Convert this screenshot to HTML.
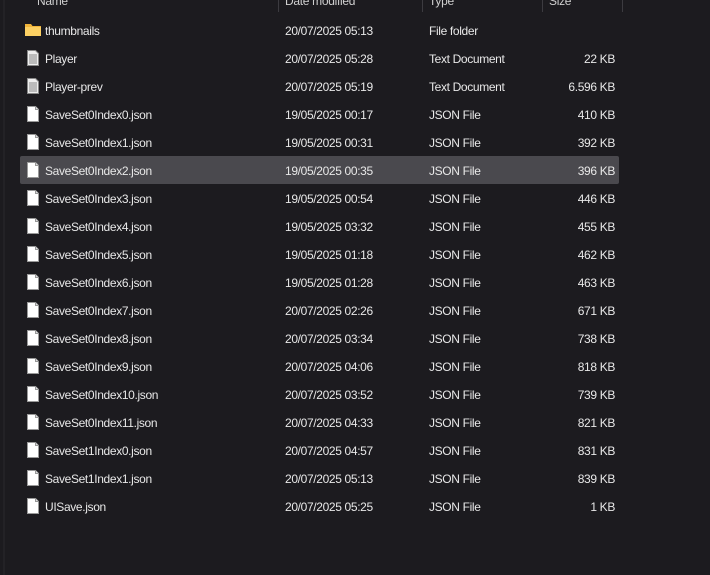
<!DOCTYPE html>
<html><head><style>
body{margin:0;width:710px;height:575px;background:#1c1b1f;font-family:"Liberation Sans",sans-serif;font-size:12px;color:#e8e8e8;position:relative;overflow:hidden}
.lb{position:absolute;left:3px;top:0;width:2px;height:575px;background:#232226}
.hd{position:absolute;top:-6px;font-size:12px;color:#cfcfcf;letter-spacing:-0.3px}
.sep{position:absolute;top:0;width:1px;height:12px;background:#3c3b40}
.r{position:absolute;left:20px;width:599px;height:28px}
.r.sel{background:#4a494e;border-radius:2px}
.r span{position:absolute;top:8px;white-space:nowrap;letter-spacing:-0.35px}
.n{left:25px}.d{left:265px}.t{left:409px}.s{right:4px}
.ic{position:absolute;left:7px;top:6px}
</style></head><body>
<div class="lb"></div>
<div class="hd" style="left:37px">Name</div>
<div class="hd" style="left:285px">Date modified</div>
<div class="hd" style="left:429px">Type</div>
<div class="hd" style="left:549px">Size</div>
<div class="sep" style="left:278px"></div><div class="sep" style="left:422px"></div><div class="sep" style="left:542px"></div><div class="sep" style="left:622px"></div>
<div id="rows"></div>
<script>
const data=[["thumbnails","20/07/2025 05:13","File folder","","f"],["Player","20/07/2025 05:28","Text Document","22 KB","t"],["Player-prev","20/07/2025 05:19","Text Document","6.596 KB","t"],
["SaveSet0Index0.json","19/05/2025 00:17","JSON File","410 KB"],["SaveSet0Index1.json","19/05/2025 00:31","JSON File","392 KB"],["SaveSet0Index2.json","19/05/2025 00:35","JSON File","396 KB"],
["SaveSet0Index3.json","19/05/2025 00:54","JSON File","446 KB"],["SaveSet0Index4.json","19/05/2025 03:32","JSON File","455 KB"],["SaveSet0Index5.json","19/05/2025 01:18","JSON File","462 KB"],
["SaveSet0Index6.json","19/05/2025 01:28","JSON File","463 KB"],["SaveSet0Index7.json","20/07/2025 02:26","JSON File","671 KB"],["SaveSet0Index8.json","20/07/2025 03:34","JSON File","738 KB"],
["SaveSet0Index9.json","20/07/2025 04:06","JSON File","818 KB"],["SaveSet0Index10.json","20/07/2025 03:52","JSON File","739 KB"],["SaveSet0Index11.json","20/07/2025 04:33","JSON File","821 KB"],
["SaveSet1Index0.json","20/07/2025 04:57","JSON File","831 KB"],["SaveSet1Index1.json","20/07/2025 05:13","JSON File","839 KB"],["UISave.json","20/07/2025 05:25","JSON File","1 KB"]];
let h="";
data.forEach((d,i)=>{
let ic;
if(d[4]=="f")ic='<svg class="ic" width="16" height="16" viewBox="0 0 16 16" style="left:5px;top:6px"><path d="M0 2h6l1.5 2H16v10H0z" fill="#f0b43a"/><path d="M0 5h16v9H0z" fill="#fcd063"/></svg>';
else if(d[4]=="t")ic='<svg class="ic" width="12" height="16" viewBox="0 0 12 16"><path d="M0.5 0.5h8l3 3v12h-11z" fill="#eee" stroke="#888"/><path d="M2 5h8M2 7h8M2 9h8M2 11h8M2 13h8" stroke="#888"/></svg>';
else ic='<svg class="ic" width="12" height="16" viewBox="0 0 12 16"><path d="M0.5 0.5h8l3 3v12h-11z" fill="#fff" stroke="#999"/><path d="M8.5 0.5v3h3" fill="#ddd" stroke="#999"/></svg>';
h+=`<div class="r${i==5?' sel':''}" style="top:${16+28*i}px">${ic}<span class="n">${d[0]}</span><span class="d">${d[1]}</span><span class="t">${d[2]}</span><span class="s">${d[3]}</span></div>`;});
document.getElementById("rows").innerHTML=h;
</script>
</body></html>
